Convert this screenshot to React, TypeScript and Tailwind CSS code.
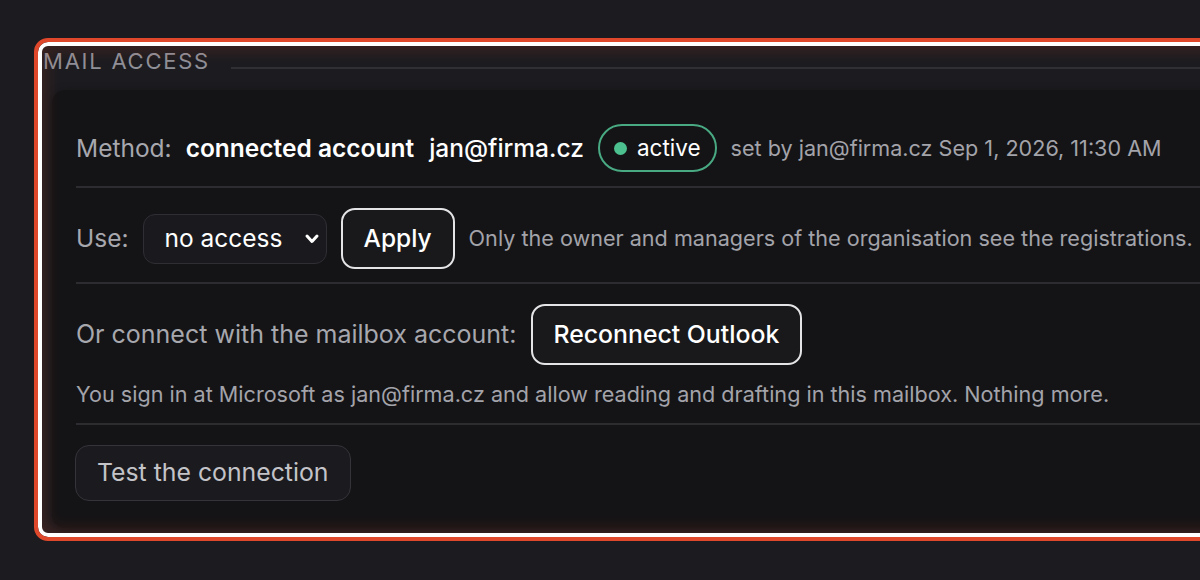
import { useState } from 'react';

export default function App() {
  const [access, setAccess] = useState('none');

  return (
    <div className="min-h-screen overflow-hidden bg-[#1c1c20] font-['Inter',sans-serif] text-[#a7a7ae]">
      <div className="ml-[34px] pt-[38px]">
        {/* highlighted section */}
        <section className="relative h-[503px] w-[1220px]">
          {/* legend */}
          <div className="flex items-center pl-[9px] pt-[9px]">
            <span className="text-[22px] leading-[28px] tracking-[0.08em] text-[#8f8f97]">MAIL ACCESS</span>
            <div className="ml-[21px] mt-[14px] h-[2px] flex-1 bg-[#2f2f34]" />
          </div>

          {/* card */}
          <div className="ml-[18px] mt-[15px] h-[438px] rounded-[14px] bg-[#141416] pl-[24px] pt-[34px] shadow-[0_2px_10px_rgba(0,0,0,0.35)]">
            <div className="flex h-[48px] items-center gap-[14px] text-[24.5px]">
              <span>Method:</span>
              <span className="font-semibold text-white">connected account</span>
              <span className="ml-px font-medium text-white">jan@firma.cz</span>
              <span className="flex h-[48px] items-center gap-[10px] rounded-full border-2 border-[#48a983] pl-[14px] pr-[14px] text-[22.5px] text-white">
                <span className="h-[13px] w-[13px] rounded-full bg-[#4cc08f]" />
                active
              </span>
              <span className="text-[21.6px] text-[#a3a3aa]">set by jan@firma.cz Sep 1, 2026, 11:30 AM</span>
            </div>

            <div className="mt-[14px] h-[2px] bg-[#2c2c31]" />

            <div className="mt-[20px] flex h-[61px] items-center text-[24.5px]">
              <span className="mr-[14px]">Use:</span>
              <div className="relative mr-[14px]">
                <select
                  value={access}
                  onChange={(e) => setAccess(e.target.value)}
                  className="h-[50px] w-[184px] appearance-none rounded-[12px] border border-[#2e2e34] bg-[#1a1a1e] pl-[21px] text-[24.5px] text-white outline-none"
                >
                  <option value="none">no access</option>
                  <option value="read">read</option>
                </select>
                <svg className="pointer-events-none absolute right-[7px] top-[18px] h-[14px] w-[16px]" viewBox="0 0 16 14" fill="none">
                  <polyline points="3,4 8,9.5 13,4" stroke="#ffffff" strokeWidth="3" strokeLinecap="round" strokeLinejoin="round" />
                </svg>
              </div>
              <button className="mr-[14px] h-[61px] rounded-[14px] border-2 border-[#e4e4e6] bg-[#19191c] px-[21px] font-medium text-white">
                Apply
              </button>
              <span className="whitespace-nowrap text-[21.6px] text-[#a3a3aa]">
                Only the owner and managers of the organisation see the registrations.
              </span>
            </div>

            <div className="mt-[13px] h-[2px] bg-[#2c2c31]" />

            <div className="mt-[20px] flex h-[61px] items-center gap-[14px] text-[25px]">
              <span>Or connect with the mailbox account:</span>
              <button className="h-[61px] rounded-[14px] border-2 border-[#e4e4e6] bg-[#19191c] px-[21px] text-[24.8px] font-medium text-white">
                Reconnect Outlook
              </button>
            </div>

            <p className="mt-[15px] text-[21.6px] leading-[28px] text-[#a3a3aa]">
              You sign in at Microsoft as jan@firma.cz and allow reading and drafting in this mailbox. Nothing more.
            </p>

            <div className="mt-[15px] h-[2px] bg-[#2c2c31]" />

            <button className="-ml-px mt-[20px] h-[56px] rounded-[14px] border border-[#34343a] bg-[#1b1b1f] px-[21px] text-[24.8px] text-[#c3c3c8]">
              Test the connection
            </button>
          </div>

          {/* highlight frame */}
          <div className="pointer-events-none absolute inset-0 rounded-[14px] border-4 border-[#e0482c] shadow-[inset_0_0_0_4px_#ffffff,inset_0_0_16px_8px_rgba(224,72,44,0.18)]" />
        </section>
      </div>
    </div>
  );
}
